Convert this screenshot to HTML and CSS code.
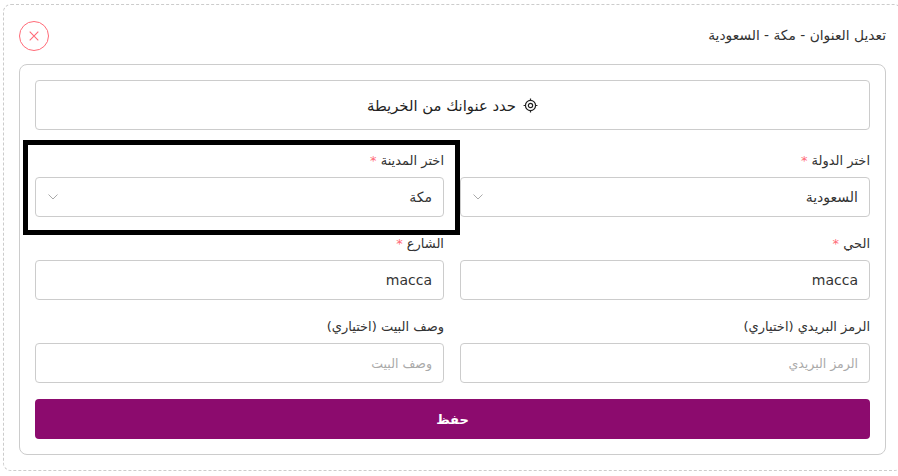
FILE: index.html
```html
<!DOCTYPE html>
<html lang="ar" dir="rtl">
<head>
    <meta charset="UTF-8">
    <meta name="viewport" content="width=device-width, initial-scale=1.0">
    <title>تعديل العنوان</title>
    <link rel="stylesheet" href="styles.css">
</head>
<body>
    <div class="card">
        <header class="card-head">
            <h1>تعديل العنوان - مكة - السعودية</h1>
            <button class="close-btn" type="button" aria-label="إغلاق">
                <svg width="10" height="10" viewBox="0 0 10 10"><path d="M.7.7l8.6 8.6M9.3.7L.7 9.3" fill="none" stroke="#ff6b78" stroke-width="1.1"/></svg>
            </button>
        </header>
        <form class="panel">
            <button class="map-btn" type="button">
                <svg width="15" height="15" viewBox="0 0 16 16" fill="none" stroke="#222" stroke-width="1.3">
                    <circle cx="8" cy="8" r="5.4"/>
                    <circle cx="8" cy="8" r="2.3"/>
                    <path d="M8 .6v2M8 13.4v2M.6 8h2M13.4 8h2"/>
                </svg>
                <span>حدد عنوانك من الخريطة</span>
            </button>
            <div class="fields">
                <div class="field">
                    <label>اختر الدولة <span class="req">*</span></label>
                    <div class="control select">
                        <span>السعودية</span>
                        <svg width="10" height="6" viewBox="0 0 10 6"><path d="M.5.5L5 5l4.500-4.500" fill="none" stroke="#aaa" stroke-width="1"/></svg>
                    </div>
                </div>
                <div class="field highlighted">
                    <label>اختر المدينة <span class="req">*</span></label>
                    <div class="control select">
                        <span>مكة</span>
                        <svg width="10" height="6" viewBox="0 0 10 6"><path d="M.5.5L5 5l4.500-4.500" fill="none" stroke="#aaa" stroke-width="1"/></svg>
                    </div>
                </div>
                <div class="field">
                    <label>الحي <span class="req">*</span></label>
                    <input class="control" type="text" value="macca">
                </div>
                <div class="field">
                    <label>الشارع <span class="req">*</span></label>
                    <input class="control" type="text" value="macca">
                </div>
                <div class="field">
                    <label>الرمز البريدي (اختياري)</label>
                    <input class="control" type="text" placeholder="الرمز البريدي">
                </div>
                <div class="field">
                    <label>وصف البيت (اختياري)</label>
                    <input class="control" type="text" placeholder="وصف البيت">
                </div>
            </div>
            <button class="save-btn" type="button">حفظ</button>
        </form>
    </div>
</body>
</html>
```

FILE: styles.css
```css
body {
    margin: 0;
    height: 476px;
    overflow: hidden;
    background-color: #fff;
    color: #333;
    font-family: "DejaVu Sans", "Noto Sans", sans-serif;
    font-size: 13px;
}
.card {
    box-sizing: border-box;
    width: 899px;
    height: 467px;
    margin: 4px -4px 0 0;
    padding: 16px 15px 15px;
    border: 1px dashed #ccc;
    border-radius: 8px;
}
.card-head {
    display: flex;
    justify-content: space-between;
    align-items: center;
    height: 30px;
    margin-bottom: 13px;
}
.card-head h1 {
    margin: 0 0 2px;
    font-size: 13.8px;
    font-weight: 400;
}
.close-btn {
    display: flex;
    justify-content: center;
    align-items: center;
    width: 30px;
    height: 30px;
    padding: 0;
    background: #fff;
    border: 1px solid #ff6b78;
    border-radius: 50%;
}
.panel {
    box-sizing: border-box;
    height: 391px;
    padding: 15px;
    border: 1px solid #ccc;
    border-radius: 8px;
}
.map-btn {
    display: flex;
    justify-content: center;
    align-items: center;
    gap: 7px;
    box-sizing: border-box;
    width: 100%;
    height: 50px;
    padding: 0;
    background: #fff;
    border: 1px solid #ccc;
    border-radius: 4px;
    color: #222;
    font: inherit;
    font-size: 14.800px;
}
.fields {
    display: grid;
    grid-template-columns: 410px 409px;
    column-gap: 16px;
    margin-top: 19px;
}
.field {
    position: relative;
    height: 83px;
}
.field label {
    display: block;
    height: 28px;
    line-height: 24px;
}
.req {
    color: #ff6b78;
}
.control {
    box-sizing: border-box;
    display: block;
    width: 100%;
    height: 40px;
    padding: 0 11px 0 12px;
    background: #fff;
    border: 1px solid #ccc;
    border-radius: 4px;
    color: #333;
    font: inherit;
    font-size: 14px;
    outline: none;
}
.control::placeholder {
    color: #aaa;
    font-size: 12.500px;
}
.select {
    display: flex;
    justify-content: space-between;
    align-items: center;
}
.highlighted::after {
    content: "";
    position: absolute;
    top: -9px;
    left: -12px;
    right: -16px;
    height: 85px;
    border: 5px solid #000;
    pointer-events: none;
}
.save-btn {
    display: block;
    width: 100%;
    height: 40px;
    margin-top: 1px;
    background-color: #8c0b6e;
    border: none;
    border-radius: 4px;
    color: #fff;
    font: inherit;
    font-weight: 700;
}
```
